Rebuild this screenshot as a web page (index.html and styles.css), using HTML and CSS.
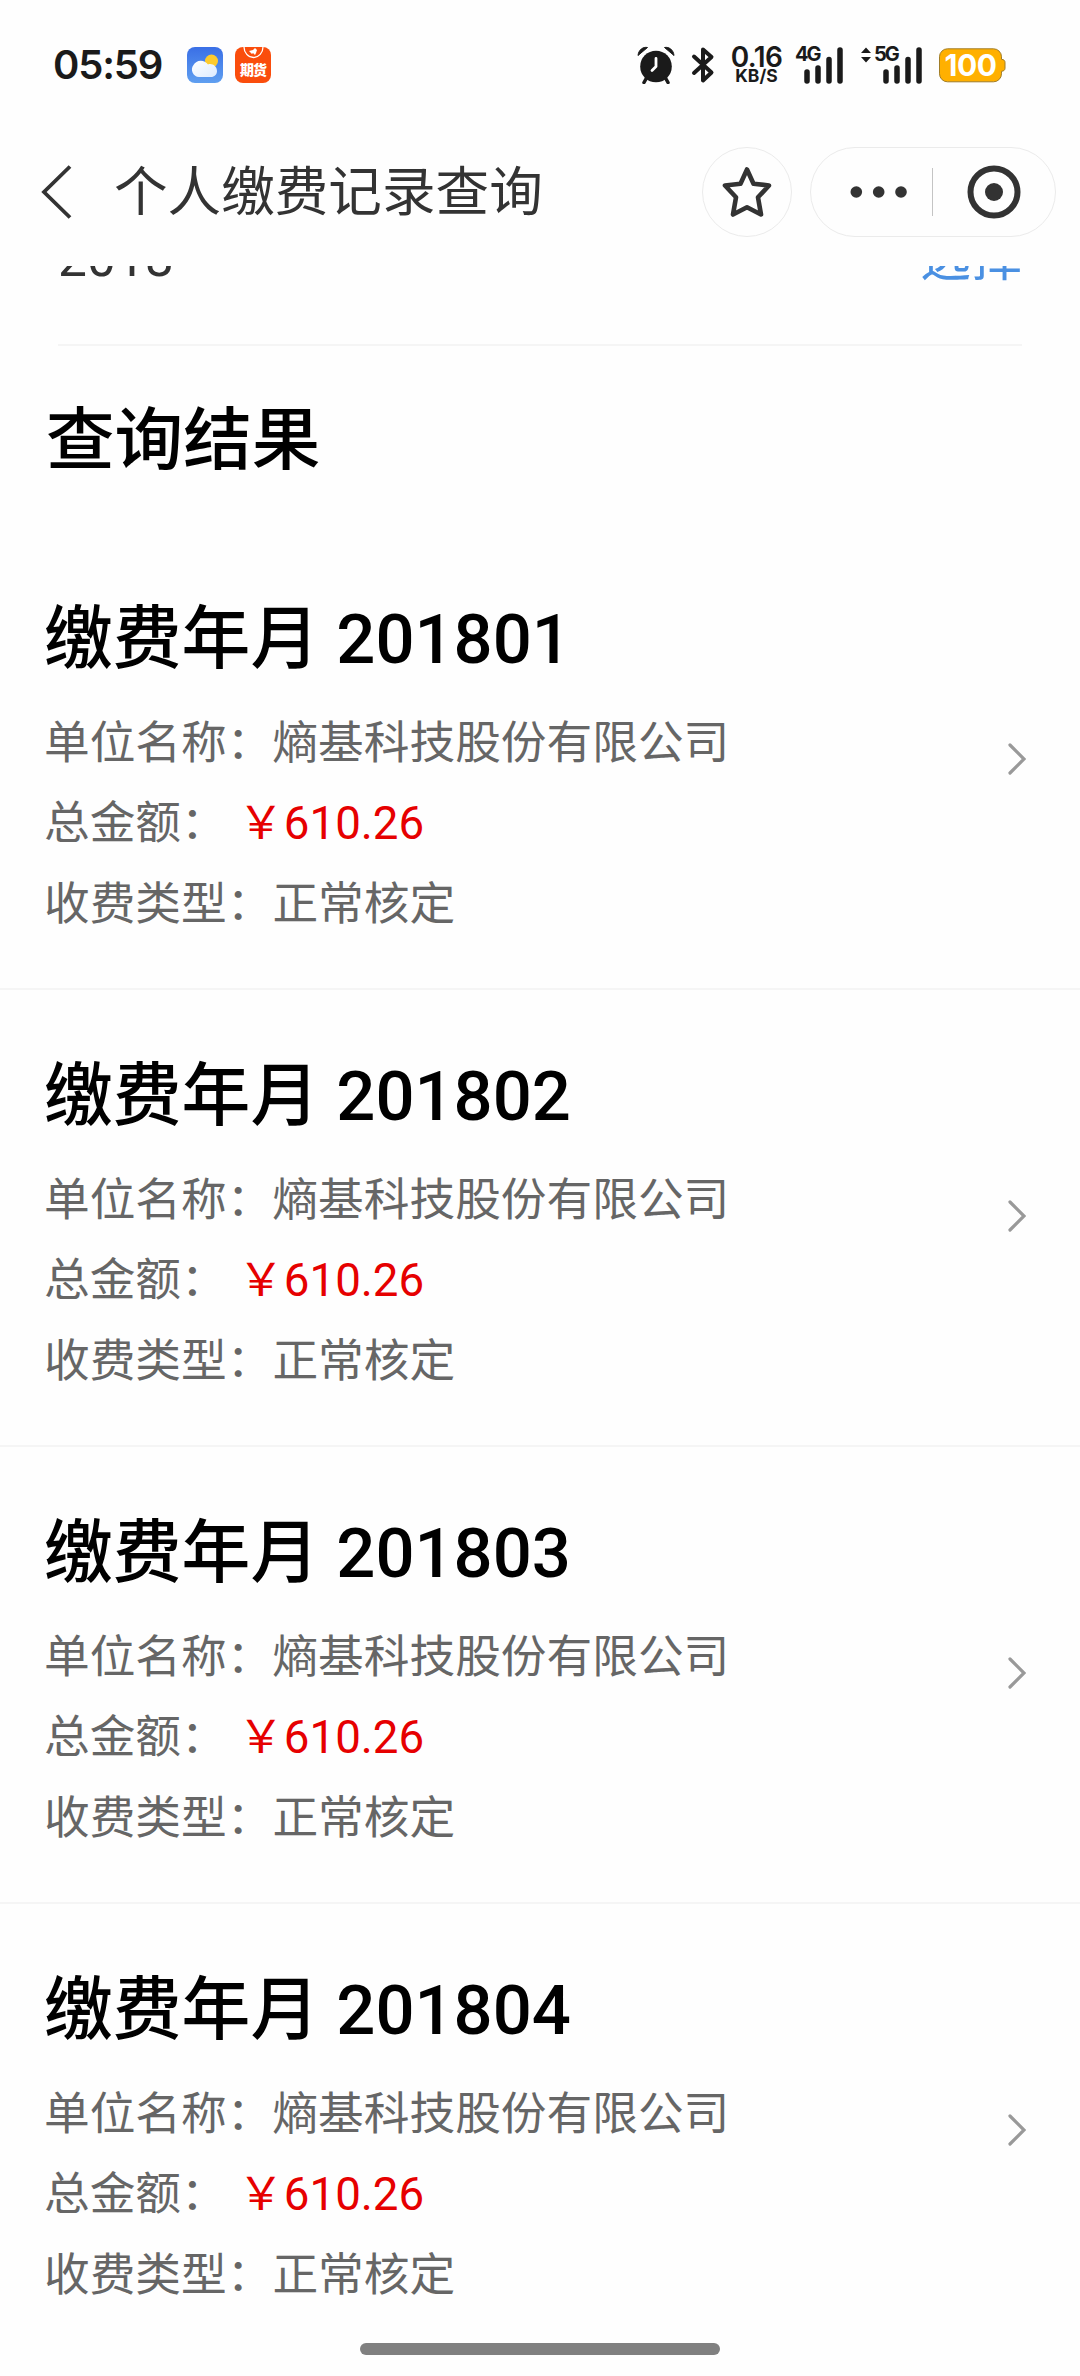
FILE: index.html
```html
<!DOCTYPE html>
<html lang="zh-CN">
<head>
<meta charset="utf-8">
<title>个人缴费记录查询</title>
<link rel="stylesheet" href="styles.css">
</head>
<body>
<div class="screen">
  <header class="status">
    <span class="clock">05:59</span>
    <svg class="app-icon" width="36" height="36" viewBox="0 0 36 36">
      <defs>
        <linearGradient id="sky" x1="0" y1="0" x2="0" y2="1"><stop offset="0" stop-color="#3a6fe6"/><stop offset="1" stop-color="#5f9ff0"/></linearGradient>
        <linearGradient id="cloud" x1="0" y1="0" x2="1" y2="1"><stop offset="0" stop-color="#fff"/><stop offset="1" stop-color="#dcebff"/></linearGradient>
      </defs>
      <rect width="36" height="36" rx="8" fill="url(#sky)"/>
      <circle cx="24.5" cy="14" r="6.5" fill="#fdcb2e"/>
      <path d="M12 30a7.500 7.500 0 0 1-5.500-12A8.500 8.500 0 0 1 21 17.500c4-1.500 9 1.500 9 6.500 0 3.500-2.500 6-6 6z" fill="url(#cloud)"/>
    </svg>
    <span class="futures">
      <svg width="36" height="14" viewBox="0 0 36 14"><path d="M9 0a9.500 10.500 0 0 0 19 0" fill="none" stroke="#fff" stroke-width="1.300"/><path d="M14 4l4-1 2-2 2 2-1 3-1 2-2-2-1 1z" fill="#fff"/></svg>
      <b>期货</b>
    </span>
    <span class="spacer"></span>
    <svg class="alarm" width="38" height="38" viewBox="0 0 38 38">
      <path d="M1 9.500C1.500 4 6 .5 10.500 1.500zM37 9.500C36.500 4 32 .5 27.500 1.500z" fill="#1a1a1a" stroke="#1a1a1a" stroke-linejoin="round"/>
      <circle cx="19" cy="20.500" r="15.800" fill="#1a1a1a"/>
      <path d="M9.500 32L7 36.500M28.500 32l2.500 4.500" stroke="#1a1a1a" stroke-width="3.500" stroke-linecap="round"/>
      <path d="M19 12.500v8l-4 4" fill="none" stroke="#fff" stroke-width="2.800" stroke-linecap="round" stroke-linejoin="round"/>
    </svg>
    <svg class="bt" width="24" height="38" viewBox="0 0 24 38"><path d="M3 10.500l17.500 16-8.500 8V3.500l8.500 7.500L3 27" fill="none" stroke="#1a1a1a" stroke-width="4" stroke-linecap="round" stroke-linejoin="round"/></svg>
    <span class="speed"><b>0.16</b><small>KB/S</small></span>
    <span class="signal four"><b>4G</b><svg width="40" height="37" viewBox="0 0 40 37"><path d="M3 25v9M14 21v13M25 12.500V34M36 3v31" stroke="#1a1a1a" stroke-width="5.500" stroke-linecap="round"/></svg></span>
    <span class="signal five"><svg class="updown" width="12" height="16" viewBox="0 0 12 16"><path d="M6 .5l5 5.500H1zM6 15.500L11 10H1z" fill="#1a1a1a"/></svg><b>5G</b><svg width="40" height="37" viewBox="0 0 40 37"><path d="M3 25v9M14 21v13M25 12.500V34M36 3v31" stroke="#1a1a1a" stroke-width="5.500" stroke-linecap="round"/></svg></span>
    <span class="battery">
      <svg width="67" height="35" viewBox="0 0 67 35"><path d="M8.500.8h46a8 8 0 0 1 8 8v2.500c2.500.2 3.500 1.500 3.500 3v6c0 1.500-1 2.800-3.500 3v2.500a8 8 0 0 1-8 8h-46a8 8 0 0 1-8-8v-17a8 8 0 0 1 8-8z" fill="#ffb000" stroke="#a07d28"/></svg>
      <b>100</b>
    </span>
  </header>

  <nav class="nav">
    <svg class="back" width="34" height="54" viewBox="0 0 34 54"><path d="M30 1.500L4 27l26 25.500" fill="none" stroke="#333" stroke-width="3.800"/></svg>
    <h1 class="title">个人缴费记录查询</h1>
    <span class="star"><svg width="52" height="54" viewBox="0 0 52 54"><path d="M26 4.500l6.500 14.200L48 20.500 37 32.300 40 49.500 26 42.300 12 49.500 15 32.300 4 20.500l15.500-1.800z" fill="none" stroke="#333" stroke-width="4.600" stroke-linejoin="round"/></svg></span>
    <span class="capsule">
      <svg width="58" height="12" viewBox="0 0 58 12"><g fill="#333"><circle cx="6.300" cy="6" r="5.800"/><circle cx="28.700" cy="6" r="5.800"/><circle cx="51" cy="6" r="5.800"/></g></svg>
      <i class="divider"></i>
      <svg class="target" width="54" height="54" viewBox="0 0 54 54"><circle cx="27" cy="27" r="23.500" fill="none" stroke="#333" stroke-width="6"/><circle cx="27" cy="27" r="9" fill="#333"/></svg>
    </span>
  </nav>

  <main class="content">
    <div class="picker"><span>2018</span><a class="pick">选择</a></div>
    <h2 class="heading">查询结果</h2>
    <section class="list">
      <article class="item">
        <div class="info">
          <h3>缴费年月 201801</h3>
          <p>单位名称：熵基科技股份有限公司</p>
          <p class="amount">总金额： <em>￥610.26</em></p>
          <p>收费类型：正常核定</p>
        </div>
        <svg class="chevron" width="18" height="32" viewBox="0 0 18 32"><path d="M2 2l14 14L2 30" fill="none" stroke="#999" stroke-width="3.200" stroke-linecap="round"/></svg>
      </article>
      <article class="item">
        <div class="info">
          <h3>缴费年月 201802</h3>
          <p>单位名称：熵基科技股份有限公司</p>
          <p class="amount">总金额： <em>￥610.26</em></p>
          <p>收费类型：正常核定</p>
        </div>
        <svg class="chevron" width="18" height="32" viewBox="0 0 18 32"><path d="M2 2l14 14L2 30" fill="none" stroke="#999" stroke-width="3.200" stroke-linecap="round"/></svg>
      </article>
      <article class="item">
        <div class="info">
          <h3>缴费年月 201803</h3>
          <p>单位名称：熵基科技股份有限公司</p>
          <p class="amount">总金额： <em>￥610.26</em></p>
          <p>收费类型：正常核定</p>
        </div>
        <svg class="chevron" width="18" height="32" viewBox="0 0 18 32"><path d="M2 2l14 14L2 30" fill="none" stroke="#999" stroke-width="3.200" stroke-linecap="round"/></svg>
      </article>
      <article class="item">
        <div class="info">
          <h3>缴费年月 201804</h3>
          <p>单位名称：熵基科技股份有限公司</p>
          <p class="amount">总金额： <em>￥610.26</em></p>
          <p>收费类型：正常核定</p>
        </div>
        <svg class="chevron" width="18" height="32" viewBox="0 0 18 32"><path d="M2 2l14 14L2 30" fill="none" stroke="#999" stroke-width="3.200" stroke-linecap="round"/></svg>
      </article>
    </section>
  </main>
  <div class="home-bar"></div>
</div>
</body>
</html>
```
FILE: styles.css
```css
* { box-sizing: border-box; margin: 0; padding: 0; }
body { background: #fefefe; font-family: Roboto, "Noto Sans CJK SC", sans-serif; }
svg { display: block; flex: none; }
.screen { position: relative; display: flex; flex-direction: column; width: 1080px; height: 2376px; overflow: hidden; }

/* status bar */
.status { display: flex; align-items: flex-start; height: 130px; flex: none; padding: 46px 74px 0 53px; color: #1a1a1a; font-family: Inter, "Noto Sans CJK SC", sans-serif; white-space: nowrap; }
.status > * { flex: none; }
.status .spacer { flex: 1; }
.clock { width: 134px; font-size: 40px; font-weight: 600; line-height: 38px; letter-spacing: -1.2px; }
.app-icon { margin-top: 1px; }
.futures { width: 36px; height: 36px; margin: 1px 0 0 12px; border-radius: 8px; background: #fa4d0c; color: #fff; overflow: hidden; }
.futures b { display: block; font-size: 14px; font-weight: 900; line-height: 18px; text-align: center; letter-spacing: -1px; }
.bt { margin: 0 14px 0 16px; }
.speed { display: flex; flex-direction: column; align-items: center; width: 55px; }
.speed b { font-size: 28px; font-weight: 600; line-height: 22px; letter-spacing: -0.6px; }
.speed small { font-size: 17.5px; font-weight: 700; line-height: 16px; }
.signal { display: flex; align-items: flex-start; }
.signal b { width: 24px; font-size: 20px; font-weight: 700; line-height: 17px; letter-spacing: -2px; }
.signal b + svg { margin: 1px 0 0 -15px; }
.four { margin-left: 11px; }
.five { margin-left: 16px; }
.updown { margin: 1px 2px 0 0; }
.battery { display: grid; margin: 2px 0 0 16px; }
.battery > * { grid-area: 1 / 1; }
.battery b { width: 63px; color: #fff; font-size: 30px; font-weight: 700; line-height: 35px; text-align: center; letter-spacing: -0.5px; }

/* title bar */
.nav { display: flex; align-items: center; height: 124px; flex: none; padding: 0 24px 0 40px; margin-bottom: 12px; }
.title { flex: 1; margin-left: 40px; padding-top: 2px; color: #333; font-size: 53.6px; font-weight: 400; line-height: 80px; white-space: nowrap; }
.star { display: grid; place-items: center; width: 90px; height: 90px; border: 1px solid #ebebeb; border-radius: 50%; }
.capsule { display: flex; align-items: center; width: 246px; height: 90px; margin-left: 18px; padding-left: 39px; border: 1px solid #ebebeb; border-radius: 45px; }
.divider { width: 1px; height: 48px; margin-left: 24px; background: #c4c4c4; }
.target { margin-left: 34px; }

/* scrolled page body */
.content { flex: 1; min-height: 0; overflow: hidden; }
.picker { display: flex; justify-content: space-between; height: 80px; margin: 0 58px; border-bottom: 2px solid #f5f5f5; color: #333; font-size: 51.5px; line-height: 60px; }
.picker > * { margin-top: -37px; }
.pick { color: #4a90e2; font-size: 51px; }
.heading { height: 187px; padding: 49px 0 0 46px; font-size: 68.6px; font-weight: 500; line-height: 92px; color: #000; }
.item { display: flex; align-items: flex-start; justify-content: space-between; height: 457px; padding: 61px 54px 0 44px; border-bottom: 2px solid #f5f5f5; }
.item:last-child { border-bottom: 0; }
.info h3 { font-size: 68.8px; font-weight: 500; line-height: 92px; color: #000; margin-bottom: 18px; white-space: nowrap; }
.info p { height: 80.5px; font-size: 45.7px; line-height: 80px; color: #666; white-space: nowrap; }
.info .amount { line-height: 78px; }
.info em { font-style: normal; color: #e60000; }
.chevron { margin-top: 149px; }
.home-bar { position: absolute; left: 360px; bottom: 21px; width: 360px; height: 12px; border-radius: 6px; background: #808080; }
```
